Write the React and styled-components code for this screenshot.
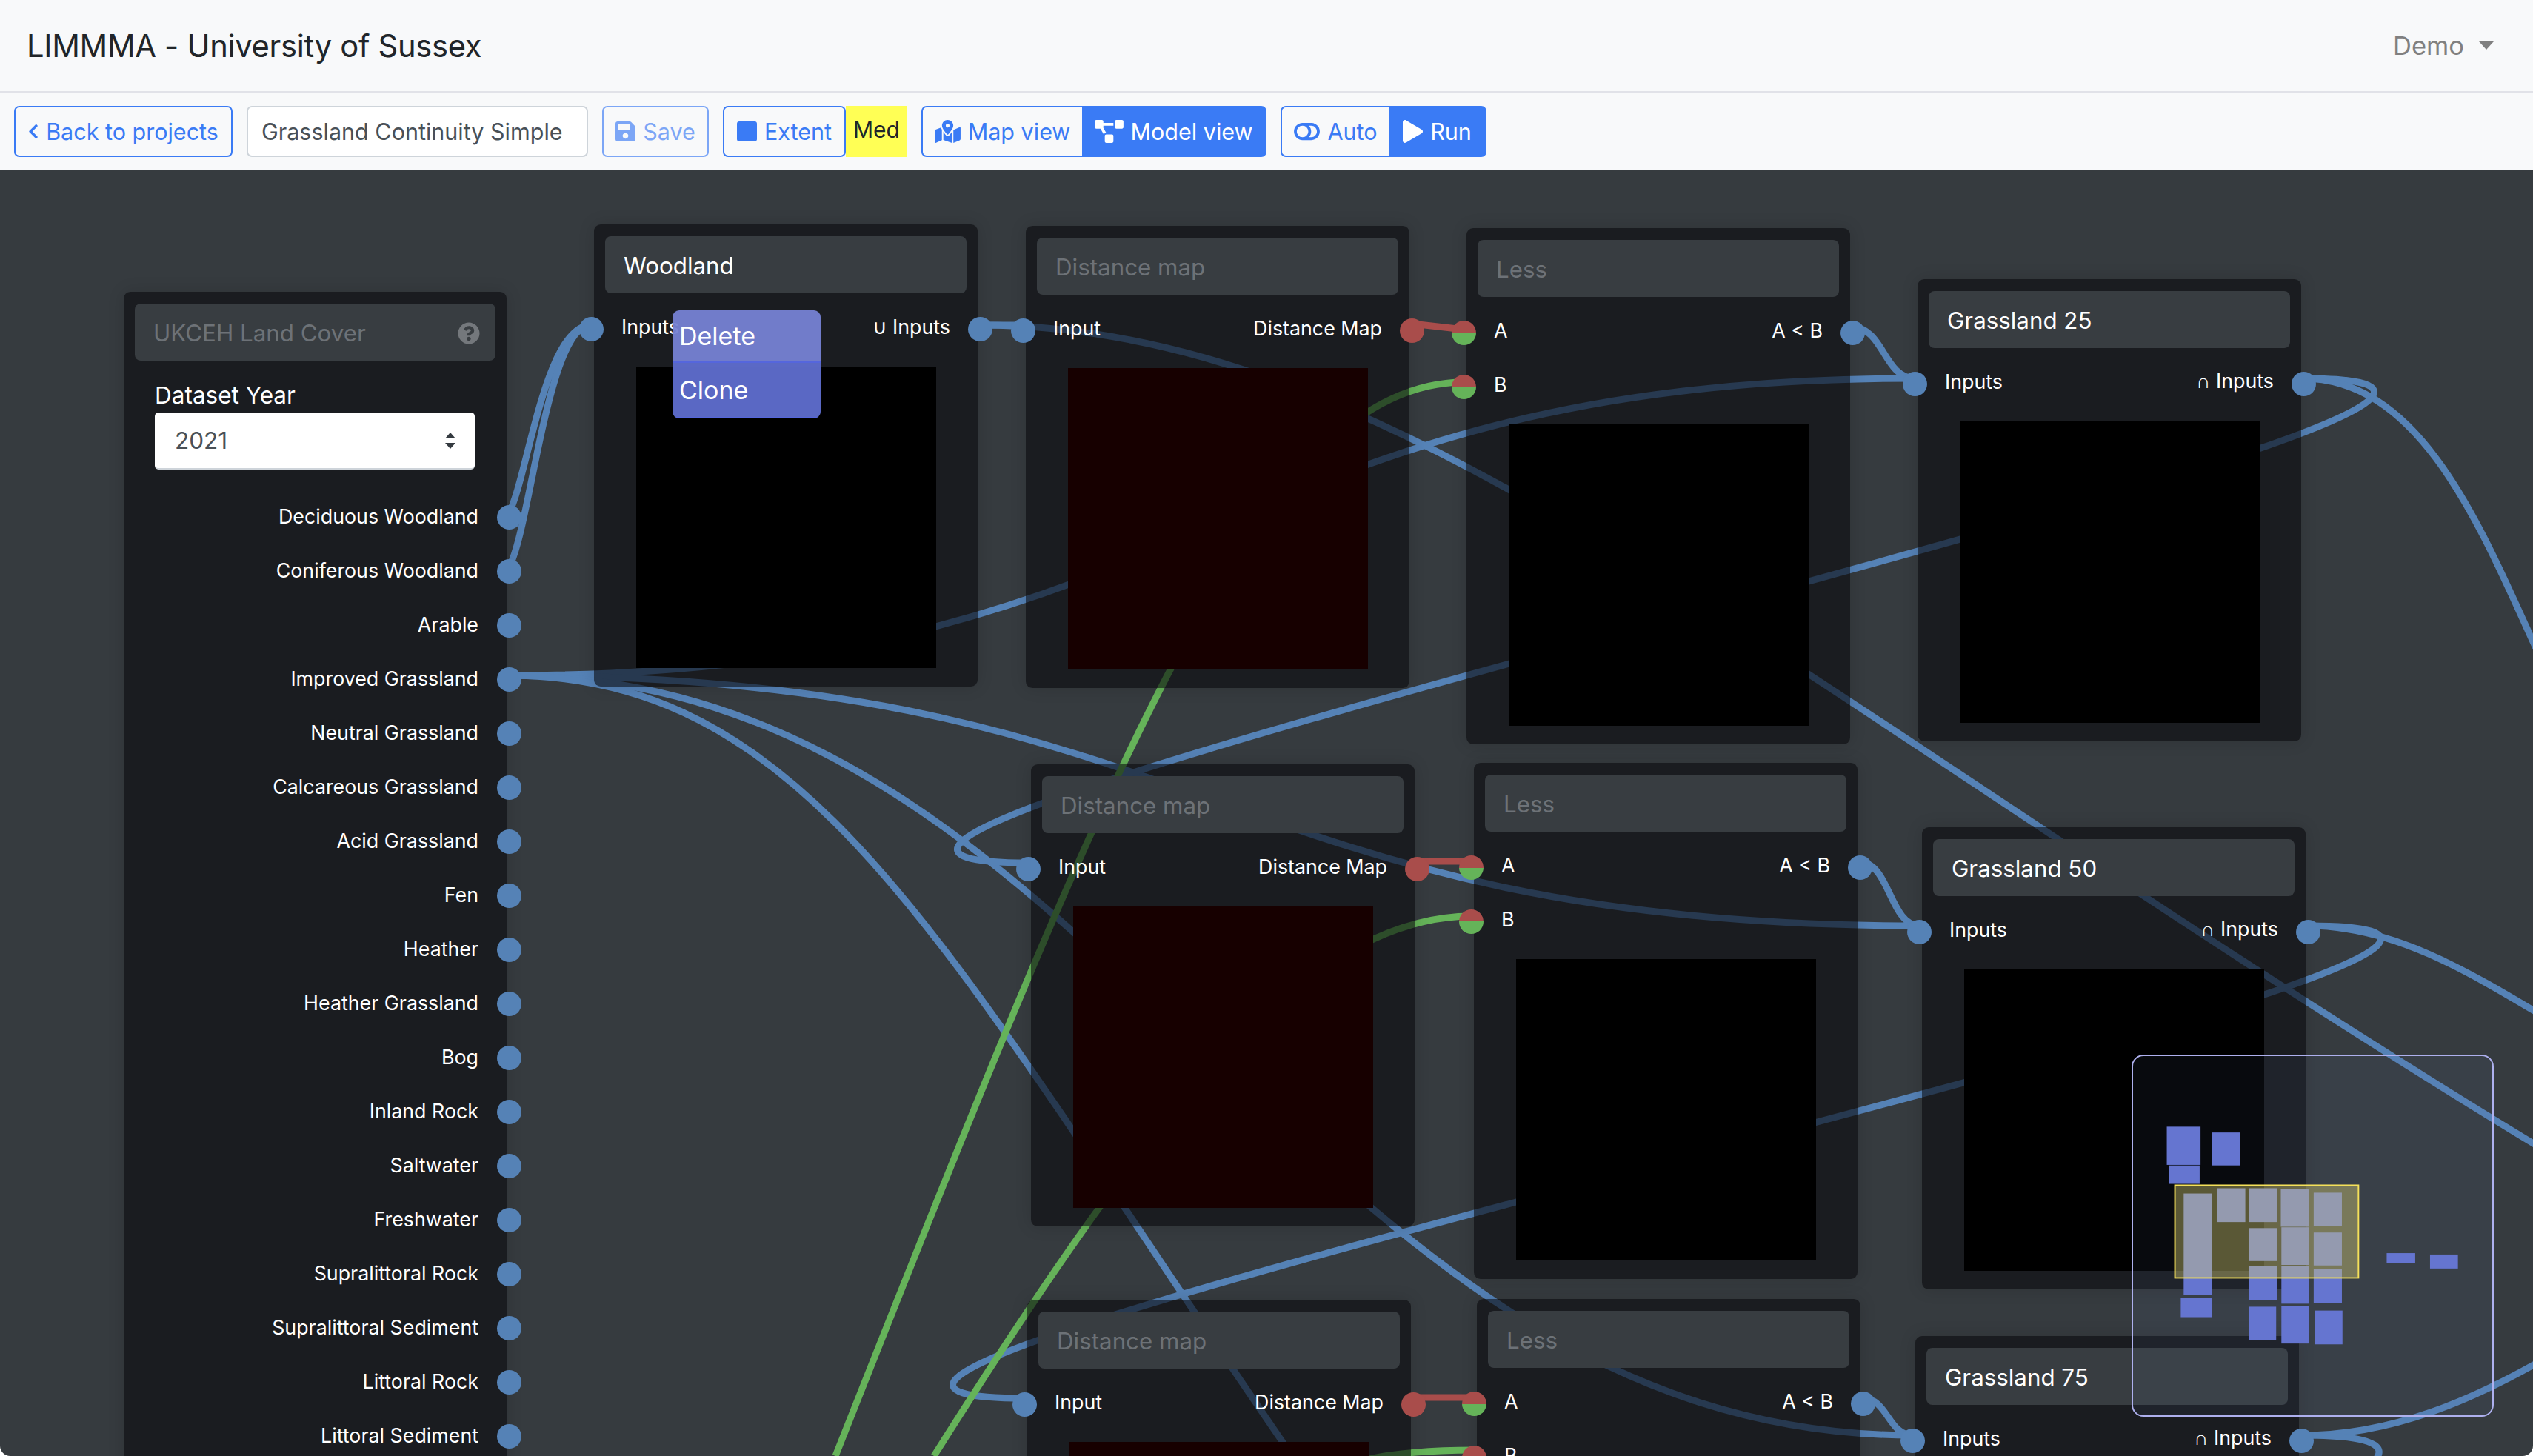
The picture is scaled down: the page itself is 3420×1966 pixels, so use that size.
import React from "react";
import styled, { createGlobalStyle } from "styled-components";
import {
  FaChevronLeft,
  FaSave,
  FaStop,
  FaMapMarkedAlt,
  FaProjectDiagram,
  FaToggleOff,
  FaPlay,
  FaQuestionCircle
} from "react-icons/fa";

const GlobalStyle = createGlobalStyle`
  html, body {
    margin: 0;
    padding: 0;
    background: #ffffff;
    font-family: Inter, "Liberation Sans", sans-serif;
  }
`;

const Page = styled.div`
  display: flex;
  flex-direction: column;
  height: 100vh;
  overflow: hidden;
`;

const Navbar = styled.div`
  display: flex;
  justify-content: space-between;
  align-items: center;
  height: 125px;
  flex: none;
  box-sizing: border-box;
  padding: 0 53px 0 36px;
  background: #f8f9fa;
  border-bottom: 2px solid #e1e2e8;
`;

const Brand = styled.div`
  font-size: 41.7px;
  color: #212529;
  letter-spacing: -0.3px;
`;

const UserMenu = styled.div`
  display: flex;
  align-items: center;
  gap: 20px;
  font-size: 34.5px;
  color: #808080;
`;

const Caret = styled.span`
  width: 0;
  height: 0;
  border-left: 10px solid transparent;
  border-right: 10px solid transparent;
  border-top: 11px solid #808080;
`;

const Toolbar = styled.div`
  display: flex;
  align-items: center;
  gap: 19px;
  height: 105px;
  flex: none;
  box-sizing: border-box;
  padding: 0 19px;
  background: #f8f9fa;
`;

const Button = styled.button`
  display: flex;
  align-items: center;
  justify-content: center;
  gap: 10px;
  width: ${(p) => p.$width}px;
  height: 69px;
  box-sizing: border-box;
  padding: 0;
  border: 2px solid #3a7bf5;
  border-radius: 7px;
  background: ${(p) => (p.$active ? "#3a7bf5" : "transparent")};
  color: ${(p) => (p.$active ? "#ffffff" : "#3a7bf5")};
  font-family: inherit;
  font-size: 30.5px;
  opacity: ${(p) => (p.$disabled ? 0.65 : 1)};
  white-space: nowrap;

  svg {
    width: ${(p) => p.$icon}px;
    height: ${(p) => (p.$icon === 14 ? 23 : 31)}px;
    flex: none;
  }
`;

const ProjectName = styled.input`
  width: 461px;
  height: 69px;
  box-sizing: border-box;
  padding: 0 18px;
  border: 2px solid #ced4da;
  border-radius: 7px;
  background: #ffffff;
  color: #495057;
  font-family: inherit;
  font-size: 30.5px;
`;

const Attached = styled.div`
  display: flex;
  align-items: center;
`;

const Group = styled.div`
  display: flex;

  ${Button}:first-child {
    border-radius: 7px 0 0 7px;
    border-right: 0;
  }

  ${Button}:last-child {
    border-radius: 0 7px 7px 0;
    border-left: 0;
  }
`;

const Quality = styled.div`
  width: 83px;
  height: 69px;
  padding-top: 14px;
  box-sizing: border-box;
  background: #ffff55;
  color: #212529;
  font-size: 30px;
  text-align: center;
`;

const Canvas = styled.div`
  position: relative;
  flex: 1;
  overflow: hidden;
  background: #363b3f;
  border-radius: 0 0 14px 14px;
`;

const WireLayer = styled.svg`
  position: absolute;
  left: 0;
  top: 0;
  width: 3420px;
  height: 1736px;
  fill: none;
  stroke-width: 9px;
`;

const Node = styled.div`
  position: absolute;
  left: ${(p) => p.$x}px;
  top: ${(p) => p.$y - 230}px;
  width: ${(p) => p.$width || 518}px;
  box-sizing: border-box;
  padding: 16px 15px 25px;
  border-radius: 9px;
  background: rgba(8, 9, 12, 0.6);
  box-shadow: 0 0 22px rgba(0, 0, 0, 0.14);
`;

const NodeHeader = styled.div`
  display: flex;
  align-items: center;
  justify-content: space-between;
  height: 77px;
  box-sizing: border-box;
  padding: 2px ${(p) => (p.$help ? 21 : 25)}px 0 25px;
  border-radius: 8px;
  background: #383d41;
  color: ${(p) => (p.$muted ? "#6d7277" : "#ffffff")};
  font-size: 31.3px;

  svg {
    font-size: 30px;
    color: #74787c;
  }
`;

const Rows = styled.div`
  margin: 10px -15px 16px;
`;

const Row = styled.div`
  position: relative;
  display: flex;
  justify-content: space-between;
  align-items: center;
  height: 73px;
  box-sizing: border-box;
  padding: 0 37px 4px;
  color: #ffffff;
  font-size: 26.8px;
`;

const Port = styled.span`
  position: absolute;
  top: 22px;
  ${(p) => (p.$side === "left" ? "left: -20px;" : "right: -20px;")}
  width: 33px;
  height: 33px;
  border-radius: 50%;
  background: ${(p) =>
    p.$kind === "dual"
      ? "linear-gradient(#a94d4b 50%, #65b359 50%)"
      : p.$kind === "red"
      ? "#a94d4b"
      : "#5582b6"};
`;

const Preview = styled.div`
  width: 405px;
  height: 407px;
  margin: 0 auto;
  background: ${(p) => p.$tint};
`;

const DatasetBody = styled.div`
  padding: 27px 28px 0 27px;
  color: #ffffff;
  font-size: 31.5px;
`;

const YearSelect = styled.div`
  display: flex;
  align-items: center;
  justify-content: space-between;
  width: 432px;
  height: 77px;
  margin-top: 4px;
  box-sizing: border-box;
  padding: 0 24px 0 27px;
  border-radius: 5px;
  background: #ffffff;
  border-bottom: 2px solid #ced4da;
  color: #495057;
`;

const LayerList = styled.div`
  margin: 26px -15px 0;
`;

const LayerRow = styled(Row)`
  justify-content: flex-end;
  padding: 0 38px 0 0;
`;

const ContextMenu = styled.div`
  position: absolute;
  left: 908px;
  top: 189px;
  width: 200px;
  overflow: hidden;
  border-radius: 9px;
  color: #ffffff;
  font-size: 34px;
`;

const MenuItem = styled.div`
  display: flex;
  align-items: center;
  height: ${(p) => p.$height}px;
  box-sizing: border-box;
  padding-left: 9px;
  background: ${(p) => p.$bg};
  border-bottom: 2px solid #5566dd;
`;

const Minimap = styled.svg`
  position: absolute;
  left: 2878px;
  top: 1194px;
  width: 489px;
  height: 489px;
  box-sizing: border-box;
  border: 2px solid #aeb0ee;
  border-radius: 16px;
  background: rgba(100, 130, 180, 0.08);
`;

const link = (x1, y1, x2, y2, k = (x2 - x1) / 2) =>
  `M${x1} ${y1} C${x1 + k} ${y1} ${x2 - k} ${y2} ${x2} ${y2}`;

const blueWires = [
  "M686 695 C712 650 735 439 798 439",
  "M686 768 C716 720 738 439 798 439",
  link(686, 912, 2586, 511),
  link(686, 912, 2592, 1250),
  "M686 912 C1500 912 1750 1938 2583 1938",
  "M686 912 C1100 912 1280 1290 1731 1946 L1760 1990",
  link(1323, 439, 1382, 439),
  "M1323 439 C1900 439 2400 925 3440 1556",
  link(2501, 442, 2586, 511),
  link(2511, 1164, 2592, 1250),
  link(2515, 1888, 2583, 1938),
  link(3109, 511, 1389, 1165, 670),
  link(3116, 1250, 1385, 1888, 680),
  "M3109 511 C3280 511 3360 740 3440 910",
  "M3116 1250 C3230 1250 3330 1310 3440 1376",
  "M3108 1938 C3230 1938 3340 1890 3440 1832",
  "M3108 1938 C3240 1938 3220 1966 3190 1985"
];

const greenWires = [
  "M1977 516 C1705 516 1510 1000 1128 1966",
  "M1987 1237 C1750 1237 1530 1540 1261 1966",
  "M1991 1958 C1930 1958 1880 1962 1840 1972"
];

const redWires = [
  "M1906 437 L1977 445",
  "M1913 1163 L1987 1163",
  "M1908 1887 L1991 1887"
];

const layers = [
  "Deciduous Woodland",
  "Coniferous Woodland",
  "Arable",
  "Improved Grassland",
  "Neutral Grassland",
  "Calcareous Grassland",
  "Acid Grassland",
  "Fen",
  "Heather",
  "Heather Grassland",
  "Bog",
  "Inland Rock",
  "Saltwater",
  "Freshwater",
  "Supralittoral Rock",
  "Supralittoral Sediment",
  "Littoral Rock",
  "Littoral Sediment"
];

const distanceRows = [{ left: "Input", right: "Distance Map", rightKind: "red" }];
const lessRows = [
  { left: "A", leftKind: "dual", right: "A < B" },
  { left: "B", leftKind: "dual" }
];
const unionRows = [{ left: "Inputs", right: "∪ Inputs" }];
const intersectRows = [{ left: "Inputs", right: "∩ Inputs" }];

const nodes = [
  { x: 802, y: 303, title: "Woodland", rows: unionRows, tint: "#000000" },
  { x: 1385, y: 305, title: "Distance map", muted: true, rows: distanceRows, tint: "#170000" },
  { x: 1980, y: 308, title: "Less", muted: true, rows: lessRows, tint: "#000000" },
  { x: 2589, y: 377, title: "Grassland 25", rows: intersectRows, tint: "#000000" },
  { x: 1392, y: 1032, title: "Distance map", muted: true, rows: distanceRows, tint: "#170000" },
  { x: 1990, y: 1030, title: "Less", muted: true, rows: lessRows, tint: "#000000" },
  { x: 2595, y: 1117, title: "Grassland 50", rows: intersectRows, tint: "#000000" },
  { x: 1387, y: 1755, title: "Distance map", muted: true, rows: distanceRows, tint: "#170000" },
  { x: 1994, y: 1754, title: "Less", muted: true, rows: lessRows, tint: "#000000" },
  { x: 2586, y: 1804, title: "Grassland 75", rows: intersectRows, tint: "#000000" }
];

// x1, x2, y1, y2 of the minimap blocks
const miniBlocks = [
  [314, 430, 375, 514],
  [470, 567, 396, 516],
  [321, 427, 516, 583],
  [372, 468, 618, 987],
  [488, 584, 599, 722],
  [597, 693, 599, 722],
  [706, 802, 602, 739],
  [819, 916, 615, 736],
  [597, 693, 744, 864],
  [708, 804, 741, 878],
  [819, 916, 760, 880],
  [597, 693, 883, 1006],
  [708, 804, 883, 1019],
  [819, 916, 894, 1017],
  [362, 468, 998, 1068],
  [597, 690, 1030, 1151],
  [708, 804, 1027, 1164],
  [822, 918, 1044, 1167],
  [1070, 1168, 835, 872],
  [1219, 1315, 840, 891]
];

const SelectArrows = () => (
  <svg width="18" height="24" viewBox="0 0 18 24">
    <path d="M9 1 L16 9 H2 Z M9 23 L2 15 H16 Z" fill="#343a40" />
  </svg>
);

const App = () => (
  <Page>
    <GlobalStyle />
    <Navbar>
      <Brand>LIMMMA - University of Sussex</Brand>
      <UserMenu>
        Demo <Caret />
      </UserMenu>
    </Navbar>
    <Toolbar>
      <Button $width={295} $icon={14}>
        <FaChevronLeft /> Back to projects
      </Button>
      <ProjectName readOnly value="Grassland Continuity Simple" />
      <Button $width={144} $icon={27} $disabled>
        <FaSave /> Save
      </Button>
      <Attached>
        <Button $width={166} $icon={27}>
          <FaStop /> Extent
        </Button>
        <Quality>Med</Quality>
      </Attached>
      <Group>
        <Button $width={217} $icon={35}>
          <FaMapMarkedAlt /> Map view
        </Button>
        <Button $width={249} $icon={39} $active>
          <FaProjectDiagram /> Model view
        </Button>
      </Group>
      <Group>
        <Button $width={147} $icon={35}>
          <FaToggleOff /> Auto
        </Button>
        <Button $width={131} $icon={27} $active>
          <FaPlay /> Run
        </Button>
      </Group>
    </Toolbar>
    <Canvas>
      <WireLayer viewBox="0 230 3420 1736">
        {blueWires.map((d) => (
          <path key={d} d={d} stroke="#5582b6" />
        ))}
        {greenWires.map((d) => (
          <path key={d} d={d} stroke="#65b359" />
        ))}
        {redWires.map((d) => (
          <path key={d} d={d} stroke="#a94d4b" />
        ))}
      </WireLayer>

      <Node $x={167} $y={394} $width={517}>
        <NodeHeader $muted $help>
          UKCEH Land Cover
          <FaQuestionCircle />
        </NodeHeader>
        <DatasetBody>
          Dataset Year
          <YearSelect>
            2021
            <SelectArrows />
          </YearSelect>
        </DatasetBody>
        <LayerList>
          {layers.map((name) => (
            <LayerRow key={name}>
              {name}
              <Port $side="right" />
            </LayerRow>
          ))}
        </LayerList>
      </Node>

      {nodes.map((node) => (
        <Node key={`${node.x}-${node.y}`} $x={node.x} $y={node.y}>
          <NodeHeader $muted={node.muted}>{node.title}</NodeHeader>
          <Rows>
            {node.rows.map((row) => (
              <Row key={row.left}>
                <Port $side="left" $kind={row.leftKind} />
                <span>{row.left}</span>
                {row.right && <span>{row.right}</span>}
                {row.right && <Port $side="right" $kind={row.rightKind} />}
              </Row>
            ))}
          </Rows>
          <Preview $tint={node.tint} />
        </Node>
      ))}

      <ContextMenu>
        <MenuItem $height={71} $bg="rgba(118, 130, 212, 0.95)">Delete</MenuItem>
        <MenuItem $height={75} $bg="rgba(94, 108, 204, 0.96)">Clone</MenuItem>
      </ContextMenu>

      <Minimap viewBox="198 118 1235 1307" preserveAspectRatio="none">
        {miniBlocks.map(([x1, x2, y1, y2]) => (
          <rect
            key={`${x1}-${y1}`}
            x={x1}
            y={y1}
            width={x2 - x1}
            height={y2 - y1}
            fill="#6575d0"
          />
        ))}
        <rect
          x="342"
          y="588"
          width="631"
          height="337"
          fill="rgba(226, 215, 120, 0.38)"
          stroke="#f5e15a"
          strokeWidth="5"
        />
      </Minimap>
    </Canvas>
  </Page>
);

export default App;
